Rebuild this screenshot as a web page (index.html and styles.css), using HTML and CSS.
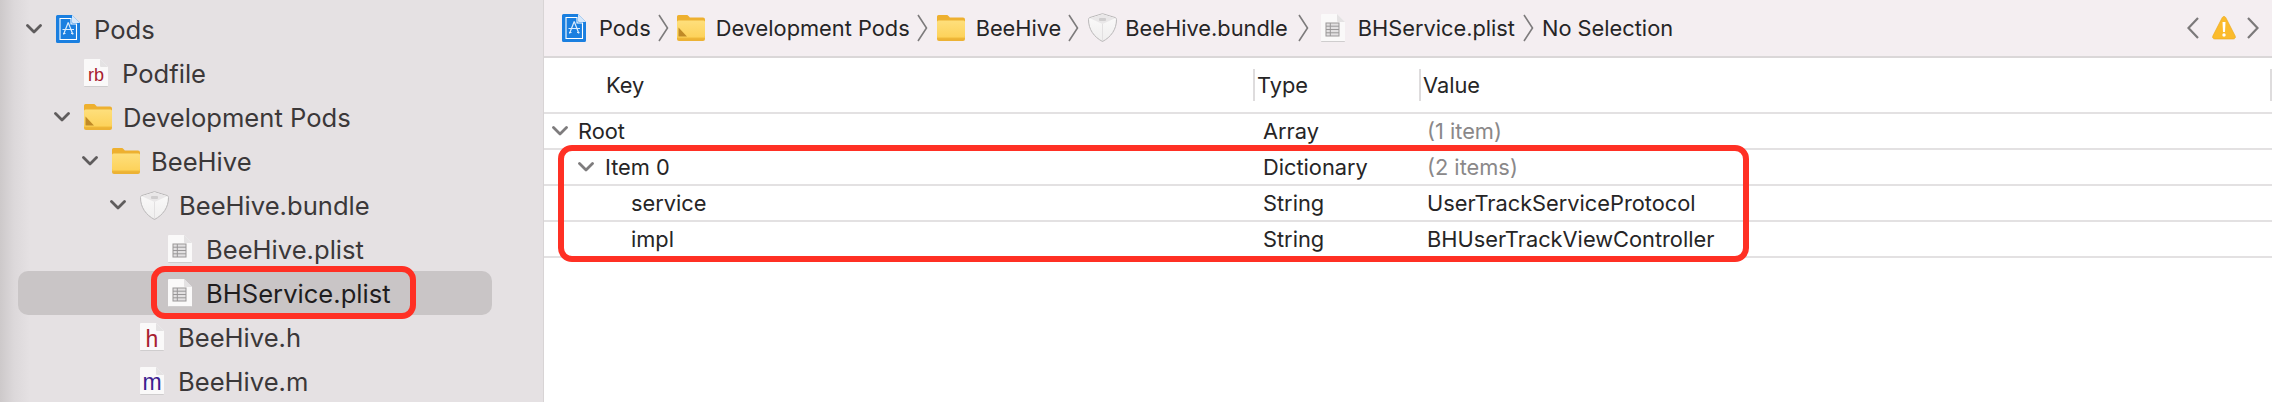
FILE: index.html
```html
<!DOCTYPE html>
<html lang="en">
<head>
<meta charset="utf-8">
<title>BHService.plist</title>
<link rel="stylesheet" href="styles.css">
</head>
<body>
<svg class="defs" width="0" height="0" aria-hidden="true">
  <defs>
    <linearGradient id="folderBody" x1="0" y1="0" x2="0" y2="1"><stop offset="0" stop-color="#fedf7c"/><stop offset="1" stop-color="#fdd25a"/></linearGradient>
    <linearGradient id="bundleBody" x1="0" y1="0" x2="0" y2="1"><stop offset="0" stop-color="#fbfafa"/><stop offset="1" stop-color="#efeeee"/></linearGradient>
    <symbol id="chev-down" viewBox="0 0 16 10"><path d="M1.500 1.500 8 8l6.500-6.500" fill="none" stroke="currentColor" stroke-width="2.800" stroke-linecap="round" stroke-linejoin="round"/></symbol>
    <symbol id="crumb-sep" viewBox="0 0 11 28"><path d="M1 1l8.500 13L1 27" fill="none" stroke="#7d7b7c" stroke-width="1.600"/></symbol>
    <symbol id="doc" viewBox="0 0 24 28"><path d="M1 0h15l8 8v19a1 1 0 0 1-1 1H1a1 1 0 0 1-1-1V1a1 1 0 0 1 1-1z" fill="#faf9f9"/><path d="M16 0l8 8h-7a1 1 0 0 1-1-1z" fill="#e4e2e3"/><path d="M0 27h24v.2a.8.8 0 0 1-.8.8H.8a.8.8 0 0 1-.8-.8z" fill="#cfcdce"/></symbol>
    <symbol id="plist" viewBox="0 0 24 28"><use href="#doc" width="24" height="28"/><g fill="none" stroke="#999798" stroke-width="1"><rect x="5" y="9" width="13" height="13" fill="#e2e0e1"/><path d="M5 12.200h13M5 15.500h13M5 18.800h13M9.300 9v13"/></g></symbol>
    <symbol id="project" viewBox="0 0 24 28"><path d="M1.500 0H16l8 8v18.500a1.500 1.500 0 0 1-1.500 1.500h-21A1.500 1.500 0 0 1 0 26.500v-25A1.500 1.500 0 0 1 1.500 0z" fill="#1a7fe0"/><path d="M16 0l8 8h-7a1 1 0 0 1-1-1z" fill="#d5e7fa"/><path d="M4 3.500h11V9h5.500v15.500H4z" fill="none" stroke="#fff" stroke-width="1.100"/><path d="M12.200 7.500 7.500 19.500M12.200 7.500l4.700 12M6.500 14.500h11.500M7 18.500h2.500M15 18.500h2.500" fill="none" stroke="#dcecfc" stroke-width="1.200"/></symbol>
    <symbol id="folder" viewBox="0 0 28 26"><path d="M1.500 0h8c1.200 0 1.800.6 2.500 1.500l.8 1H26a2 2 0 0 1 2 2V8H0V1.500A1.500 1.500 0 0 1 1.500 0z" fill="#eeb02f"/><rect y="4.500" width="28" height="21.500" rx="2" fill="#ecb234"/><rect y="5.500" width="28" height="17" rx="1.500" fill="url(#folderBody)"/><path d="M0 22h28v1.200H0z" fill="#f7c74a"/></symbol>
    <symbol id="folder-marked" viewBox="0 0 28 26"><use href="#folder" width="28" height="26"/><path d="M1.500 12.500 10 21.500H1.500z" fill="#c08a26"/></symbol>
    <symbol id="bundle" viewBox="0 0 29 29"><path d="M14.500.7 27 4.500c1 .3 1.500 1 1.500 2 0 10-5.500 17.500-14 22C6 24 .5 16.500.5 6.500c0-1 .5-1.700 1.500-2z" fill="url(#bundleBody)" stroke="#b9b7b8"/><path d="M14.500 1.200 27 5.200 14.500 11 2 5.200z" fill="#e9e7e8"/><path d="M14.500 11v17" stroke="#e2e0e1"/><rect x="11" y="5" width="7" height="3" rx="1" fill="#cfcdce"/></symbol>
    <symbol id="warn" viewBox="0 0 24 25"><path d="M12 1.500c.8 0 1.400.4 1.900 1.300l9.200 18c.8 1.600 0 3.200-1.900 3.200H2.800C.9 24 .1 22.400.9 20.800l9.200-18c.5-.9 1.100-1.300 1.900-1.300z" fill="#fbbb2c" stroke="#eaa91f" stroke-width=".6"/><path d="M10.500 7h3l-.5 10h-2z" fill="#fff"/><circle cx="12" cy="20" r="1.700" fill="#fff"/></symbol>
  </defs>
</svg>

<div class="app">
  <aside class="sidebar">
    <div class="tree-row depth-0"><svg class="chev"><use href="#chev-down"/></svg><svg class="ico ico-doc"><use href="#project"/></svg><span>Pods</span></div>
    <div class="tree-row depth-1"><span class="chev-gap"></span><span class="badge-doc"><svg class="ico ico-doc"><use href="#doc"/></svg><span class="badge badge-rb">rb</span></span><span>Podfile</span></div>
    <div class="tree-row depth-1"><svg class="chev"><use href="#chev-down"/></svg><svg class="ico ico-folder"><use href="#folder-marked"/></svg><span>Development Pods</span></div>
    <div class="tree-row depth-2"><svg class="chev"><use href="#chev-down"/></svg><svg class="ico ico-folder"><use href="#folder"/></svg><span>BeeHive</span></div>
    <div class="tree-row depth-3"><svg class="chev"><use href="#chev-down"/></svg><svg class="ico ico-bundle"><use href="#bundle"/></svg><span>BeeHive.bundle</span></div>
    <div class="tree-row depth-4"><span class="chev-gap"></span><svg class="ico ico-doc"><use href="#plist"/></svg><span>BeeHive.plist</span></div>
    <div class="tree-row depth-4 selected"><span class="chev-gap"></span><svg class="ico ico-doc"><use href="#plist"/></svg><span>BHService.plist</span></div>
    <div class="tree-row depth-3"><span class="chev-gap"></span><span class="badge-doc"><svg class="ico ico-doc"><use href="#doc"/></svg><span class="badge badge-h">h</span></span><span>BeeHive.h</span></div>
    <div class="tree-row depth-3"><span class="chev-gap"></span><span class="badge-doc"><svg class="ico ico-doc"><use href="#doc"/></svg><span class="badge badge-m">m</span></span><span>BeeHive.m</span></div>
    <div class="mark mark-file"></div>
  </aside>

  <main class="editor">
    <nav class="crumbs">
      <svg class="crumb-ico ico-doc"><use href="#project"/></svg><span class="crumb-text">Pods</span><svg class="sep sep-first"><use href="#crumb-sep"/></svg>
      <svg class="crumb-ico ico-folder"><use href="#folder-marked"/></svg><span class="crumb-text">Development Pods</span><svg class="sep"><use href="#crumb-sep"/></svg>
      <svg class="crumb-ico ico-folder"><use href="#folder"/></svg><span class="crumb-text">BeeHive</span><svg class="sep"><use href="#crumb-sep"/></svg>
      <svg class="crumb-ico ico-bundle"><use href="#bundle"/></svg><span class="crumb-text">BeeHive.bundle</span><svg class="sep sep-wide"><use href="#crumb-sep"/></svg>
      <svg class="crumb-ico ico-doc"><use href="#plist"/></svg><span class="crumb-text">BHService.plist</span><svg class="sep sep-tight"><use href="#crumb-sep"/></svg>
      <span class="crumb-text">No Selection</span>
      <div class="nav-tools">
        <svg class="nav-arrow" viewBox="0 0 12 22"><path d="M11 1 1.500 11 11 21" fill="none" stroke="#7b797a" stroke-width="2.200"/></svg>
        <svg class="warn"><use href="#warn"/></svg>
        <svg class="nav-arrow" viewBox="0 0 12 22"><path d="M1 1l9.500 10L1 21" fill="none" stroke="#7b797a" stroke-width="2.200"/></svg>
      </div>
    </nav>

    <div class="plist-head">
      <div class="head-key">Key</div>
      <div class="head-type">Type</div>
      <div class="head-value">Value</div>
      <div class="head-end"></div>
    </div>

    <div class="plist-row">
      <div class="cell-key"><svg class="row-chev"><use href="#chev-down"/></svg>Root</div>
      <div class="cell-type">Array</div>
      <div class="cell-value muted">(1 item)</div>
    </div>
    <div class="plist-row">
      <div class="cell-key level-1"><svg class="row-chev"><use href="#chev-down"/></svg>Item 0</div>
      <div class="cell-type">Dictionary</div>
      <div class="cell-value muted">(2 items)</div>
    </div>
    <div class="plist-row">
      <div class="cell-key level-2">service</div>
      <div class="cell-type">String</div>
      <div class="cell-value">UserTrackServiceProtocol</div>
    </div>
    <div class="plist-row">
      <div class="cell-key level-2">impl</div>
      <div class="cell-type">String</div>
      <div class="cell-value">BHUserTrackViewController</div>
    </div>
    <div class="mark mark-rows"></div>
  </main>
</div>
</body>
</html>
```

FILE: styles.css
```css
* { box-sizing: border-box; }

html, body {
  margin: 0;
  height: 100%;
  background: #fff;
}

body {
  font-family: Inter, "Liberation Sans", sans-serif;
  overflow: hidden;
}

.defs { position: absolute; }

.app {
  display: flex;
  width: 2272px;
  height: 402px;
}

/* Sidebar */
.sidebar {
  position: relative;
  flex: 0 0 544px;
  padding-top: 7px;
  background:
    linear-gradient(to right, #cdc9ca 0, #dcd8da 14px, #e5e1e3 30px),
    #e5e1e3;
  border-right: 1px solid #d8d4d5;
  color: #3b3839;
  font-size: 25.6px;
}

.tree-row {
  display: flex;
  align-items: center;
  height: 44px;
  margin: 0 51px 0 18px;
  border-radius: 10px;
  white-space: nowrap;
}

.tree-row.selected {
  background: #c9c5c6;
  color: #1f1d1e;
}

.depth-0 { padding-left: 8px; }
.depth-1 { padding-left: 36px; }
.depth-2 { padding-left: 64px; }
.depth-3 { padding-left: 92px; }
.depth-4 { padding-left: 120px; }

.chev, .chev-gap {
  flex: 0 0 16px;
  width: 16px;
  height: 10px;
  margin-right: 14px;
  color: #5f5c5d;
}

.ico { flex: none; display: block; }
.ico-doc { width: 24px; height: 28px; margin-right: 14px; }
.ico-folder { width: 28px; height: 26px; margin-right: 11px; }
.ico-bundle { width: 29px; height: 29px; margin-right: 10px; }

.badge-doc { position: relative; flex: none; display: flex; }

.badge {
  position: absolute;
  left: 0;
  width: 24px;
  text-align: center;
  font-family: "Liberation Sans", sans-serif;
  line-height: 1;
}

.badge-rb { top: 7px; font-size: 18px; color: #a8202f; }
.badge-h { top: 5px; font-size: 23px; color: #a8202f; }
.badge-m { top: 4px; font-size: 23px; color: #3d1d8f; }

.mark {
  position: absolute;
  border: 6px solid #ff3024;
  border-radius: 14px;
  pointer-events: none;
}

.mark-file {
  left: 151px;
  top: 266px;
  width: 265px;
  height: 53px;
}

/* Editor */
.editor {
  position: relative;
  flex: 1;
  min-width: 0;
  color: #262526;
  font-size: 21.8px;
}

.crumbs {
  display: flex;
  align-items: center;
  height: 58px;
  padding: 0 13px 1px 18px;
  background: #f4eef1;
  border-bottom: 2px solid #dad7d8;
  white-space: nowrap;
}

.crumb-ico { flex: none; }
.crumbs .ico-doc { margin-right: 13px; }
.crumbs .ico-folder { margin-right: 11px; }
.crumbs .ico-bundle { margin-right: 8px; }

.sep {
  flex: none;
  width: 11px;
  height: 28px;
  margin: 0 9px 0 7px;
}

.sep-first { margin-right: 8px; }
.sep-wide { margin: 0 12px 0 10px; }
.sep-tight { margin: 0 8px; }

.nav-tools {
  display: flex;
  align-items: center;
  margin-left: auto;
}

.nav-arrow { width: 12px; height: 22px; }
.warn { width: 24px; height: 25px; margin: 0 11px 0 13px; }

.plist-head {
  display: flex;
  align-items: center;
  height: 56px;
  border-bottom: 2px solid #e3e1e2;
}

.head-key { flex: 0 0 709px; padding-left: 62px; }

.head-type, .head-value, .head-end {
  height: 32px;
  line-height: 32px;
  border-left: 2px solid #dedcdd;
  padding-left: 2px;
}

.head-type { flex: 0 0 166px; }
.head-value { flex: 0 0 851px; }
.head-end { flex: 1; }

.plist-row {
  display: flex;
  align-items: center;
  height: 36px;
  border-bottom: 2px solid #e3e1e2;
}

.cell-key {
  display: flex;
  align-items: center;
  flex: 0 0 719px;
  padding-left: 8px;
}

.level-1 { padding-left: 34px; }
.level-2 { padding-left: 87px; }

.row-chev {
  flex: none;
  width: 16px;
  height: 10px;
  margin-right: 10px;
  color: #7e7c7d;
}

.level-1 .row-chev { margin-right: 11px; }

.cell-type { flex: 0 0 164px; }
.cell-value { flex: 1; }
.muted { color: #8a8889; }

.mark-rows {
  left: 14px;
  top: 145px;
  width: 1191px;
  height: 117px;
}
```
